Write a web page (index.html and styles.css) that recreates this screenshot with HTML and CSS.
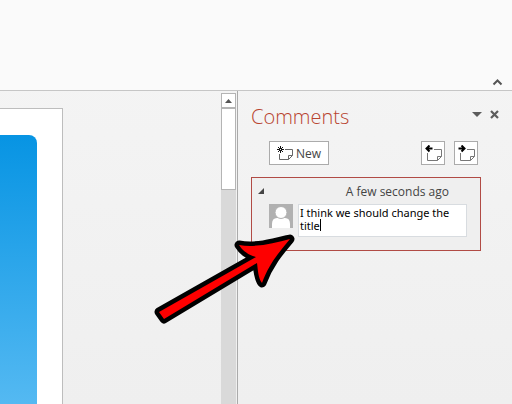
FILE: index.html
```html
<!DOCTYPE html>
<html lang="en">
<head>
<meta charset="utf-8">
<title>Comments</title>
<link rel="stylesheet" href="styles.css">
</head>
<body>
<div class="app">
  <header class="ribbon">
    <button class="plain" type="button" aria-label="Collapse the ribbon">
      <svg width="11" height="8" viewBox="0 0 11 8"><path d="M1.5 6.5 5.5 2.5 9.5 6.5" fill="none" stroke="#555" stroke-width="2"/></svg>
    </button>
  </header>
  <div class="workspace">
    <main class="canvas">
      <div class="slide"><div class="shape"></div></div>
    </main>
    <div class="scrollbar">
      <button class="scroll-up" type="button" aria-label="Scroll up">
        <svg width="7" height="4" viewBox="0 0 7 4"><path d="M0 4 3.5 0 7 4z" fill="#555"/></svg>
      </button>
      <div class="thumb"></div>
    </div>
    <aside class="pane">
      <div class="pane-head">
        <h1>Comments</h1>
        <div class="pane-actions">
          <button class="plain" type="button" aria-label="Pane options">
            <svg width="10" height="5" viewBox="0 0 10 5"><path d="M0 0h10L5 5z" fill="#5c5c5c"/></svg>
          </button>
          <button class="plain" type="button" aria-label="Close">
            <svg width="9" height="9" viewBox="0 0 9 9"><path d="M1 1 8 8M8 1 1 8" stroke="#5c5c5c" stroke-width="2.2"/></svg>
          </button>
        </div>
      </div>
      <div class="toolbar">
        <button class="tool new" type="button">
          <svg width="16" height="15" viewBox="0 0 16 15"><path d="M8 3.500H15.500V9.500L11.500 13.500H2.500V8M15.500 9.500H11.500V13.500" fill="none" stroke="#666"/><path d="M3.500 0V7M0 3.500H7M1 1 6 6M6 1 1 6" stroke="#111"/><path d="M3 3h1v1H3z" fill="#fff"/></svg>
          New
        </button>
        <div class="nav">
          <button class="tool" type="button" aria-label="Previous comment">
            <svg width="17" height="16" viewBox="0 0 17 16"><path d="M9 4.500H16.500V11.500L12.500 15.500H2.500V8M16.500 11.500H12.500V15.500" fill="none" stroke="#777"/><path d="M7.500 3.500H2M4.500 .5 1.500 3.500 4.500 6.500" fill="none" stroke="#000" stroke-width="2"/></svg>
          </button>
          <button class="tool" type="button" aria-label="Next comment">
            <svg width="17" height="16" viewBox="0 0 17 16"><path d="M9 4.500H16.500V11.500L12.500 15.500H2.500V8M16.500 11.500H12.500V15.500" fill="none" stroke="#777"/><path d="M.5 3.500H6M3.500 .5 6.500 3.500 3.500 6.500" fill="none" stroke="#000" stroke-width="2"/></svg>
          </button>
        </div>
      </div>
      <article class="comment">
        <div class="comment-head">
          <svg width="6" height="6" viewBox="0 0 6 6"><path d="M6 0V6H0z" fill="#444"/></svg>
          <time>A few seconds ago</time>
        </div>
        <div class="comment-body">
          <svg class="avatar" width="24" height="24" viewBox="0 0 24 24"><path d="M0 0h24v24H0z" fill="#b1b1b1"/><path d="M3 24V20Q3 14 8 14H16Q21 14 21 20V24z" fill="#fff"/><circle cx="12" cy="8.500" r="6" fill="#fff" stroke="#b1b1b1"/></svg>
          <div class="field">
            <textarea aria-label="Comment" spellcheck="false" rows="2">I think we should change the title</textarea>
            <span class="caret"></span>
          </div>
        </div>
      </article>
    </aside>
  </div>
  <svg class="pointer" width="146" height="98" viewBox="0 0 146 98"><path d="M7 82 104 27 C96 25 90 20 87 15 C104 18 122 13 138 9 C127 22 117 34 110 53 C106 48 106 40 105 33 L12 89Z" fill="#fe0000" stroke="#000" stroke-width="9" stroke-linejoin="round" paint-order="stroke"/></svg>
</div>
</body>
</html>
```

FILE: styles.css
```css
* { box-sizing: border-box; }
body {
  margin: 0;
  font-family: "Open Sans", "Noto Sans", sans-serif;
  font-size: 12px;
  color: #444;
}
h1 { margin: 0; }
svg { display: block; flex: none; }
button { font: inherit; color: inherit; padding: 0; }
.app {
  position: relative;
  display: flex;
  flex-direction: column;
  height: 100vh;
  overflow: hidden;
  background: linear-gradient(#f5f5f5, #efefef);
}
.ribbon {
  display: flex;
  justify-content: flex-end;
  align-items: flex-end;
  flex: none;
  height: 91px;
  padding: 0 9px 4px;
  background: #fafafa;
  border-bottom: 1px solid #c6c6c6;
}
.plain { border: 0; background: none; }
.workspace { display: flex; flex: 1; min-height: 0; }
.canvas { flex: 1; padding-top: 17px; }
.slide {
  width: 63px;
  height: 100%;
  padding: 26px 25px 0 0;
  background: #fff;
  border: solid #bdbdbd;
  border-width: 1px 1px 0 0;
}
.shape {
  height: 100%;
  border-radius: 0 8px 0 0;
  background: linear-gradient(#0794e3, #54b9f2);
}
.scrollbar {
  display: flex;
  flex-direction: column;
  width: 15px;
  margin: 2px 1px 0 0;
  background: #d9d9d9;
}
.scroll-up, .thumb { border: 1px solid #b4b4b4; background: #fff; }
.scroll-up {
  display: flex;
  align-items: center;
  justify-content: center;
  height: 15px;
}
.thumb { height: 82px; }
.pane {
  width: 275px;
  padding: 11px 31px 0 13px;
  border-left: 1px solid #aaa;
}
.pane-head { display: flex; justify-content: space-between; height: 39px; margin-right: -18px; }
.pane-head h1 {
  font-size: 20px;
  line-height: 30px;
  font-weight: 300;
  color: #b8432f;
}
.pane-actions { display: flex; gap: 8px; height: 24px; align-items: center; }
.toolbar { display: flex; justify-content: space-between; padding: 0 3px 0 18px; }
.nav { display: flex; gap: 9px; }
.tool {
  display: flex;
  align-items: center;
  justify-content: center;
  width: 24px;
  height: 24px;
  background: #fff;
  border: 1px solid #ababab;
}
.new { width: 60px; gap: 3px; }
.comment {
  height: 74px;
  margin-top: 12px;
  padding: 6px 13px 0 6px;
  border: 1px solid #b14b45;
  background: #efefef;
}
.comment-head {
  display: flex;
  justify-content: space-between;
  align-items: center;
  height: 14px;
  padding-right: 18px;
}
.comment-body { display: flex; gap: 5px; margin: 6px 0 0 11px; }
.field { position: relative; flex: 1; height: 33px; }
textarea {
  display: block;
  width: 100%;
  height: 100%;
  padding: 1px;
  border: 1px solid #d8dce0;
  outline: 0;
  resize: none;
  overflow: hidden;
  background: #fff;
  color: #000;
  font: 11px/13px "Noto Sans", sans-serif;
}
.caret {
  position: absolute;
  left: 22px;
  top: 15px;
  width: 1px;
  height: 12px;
  background: #000;
}
.pointer { position: absolute; left: 152px; top: 230px; }
```
